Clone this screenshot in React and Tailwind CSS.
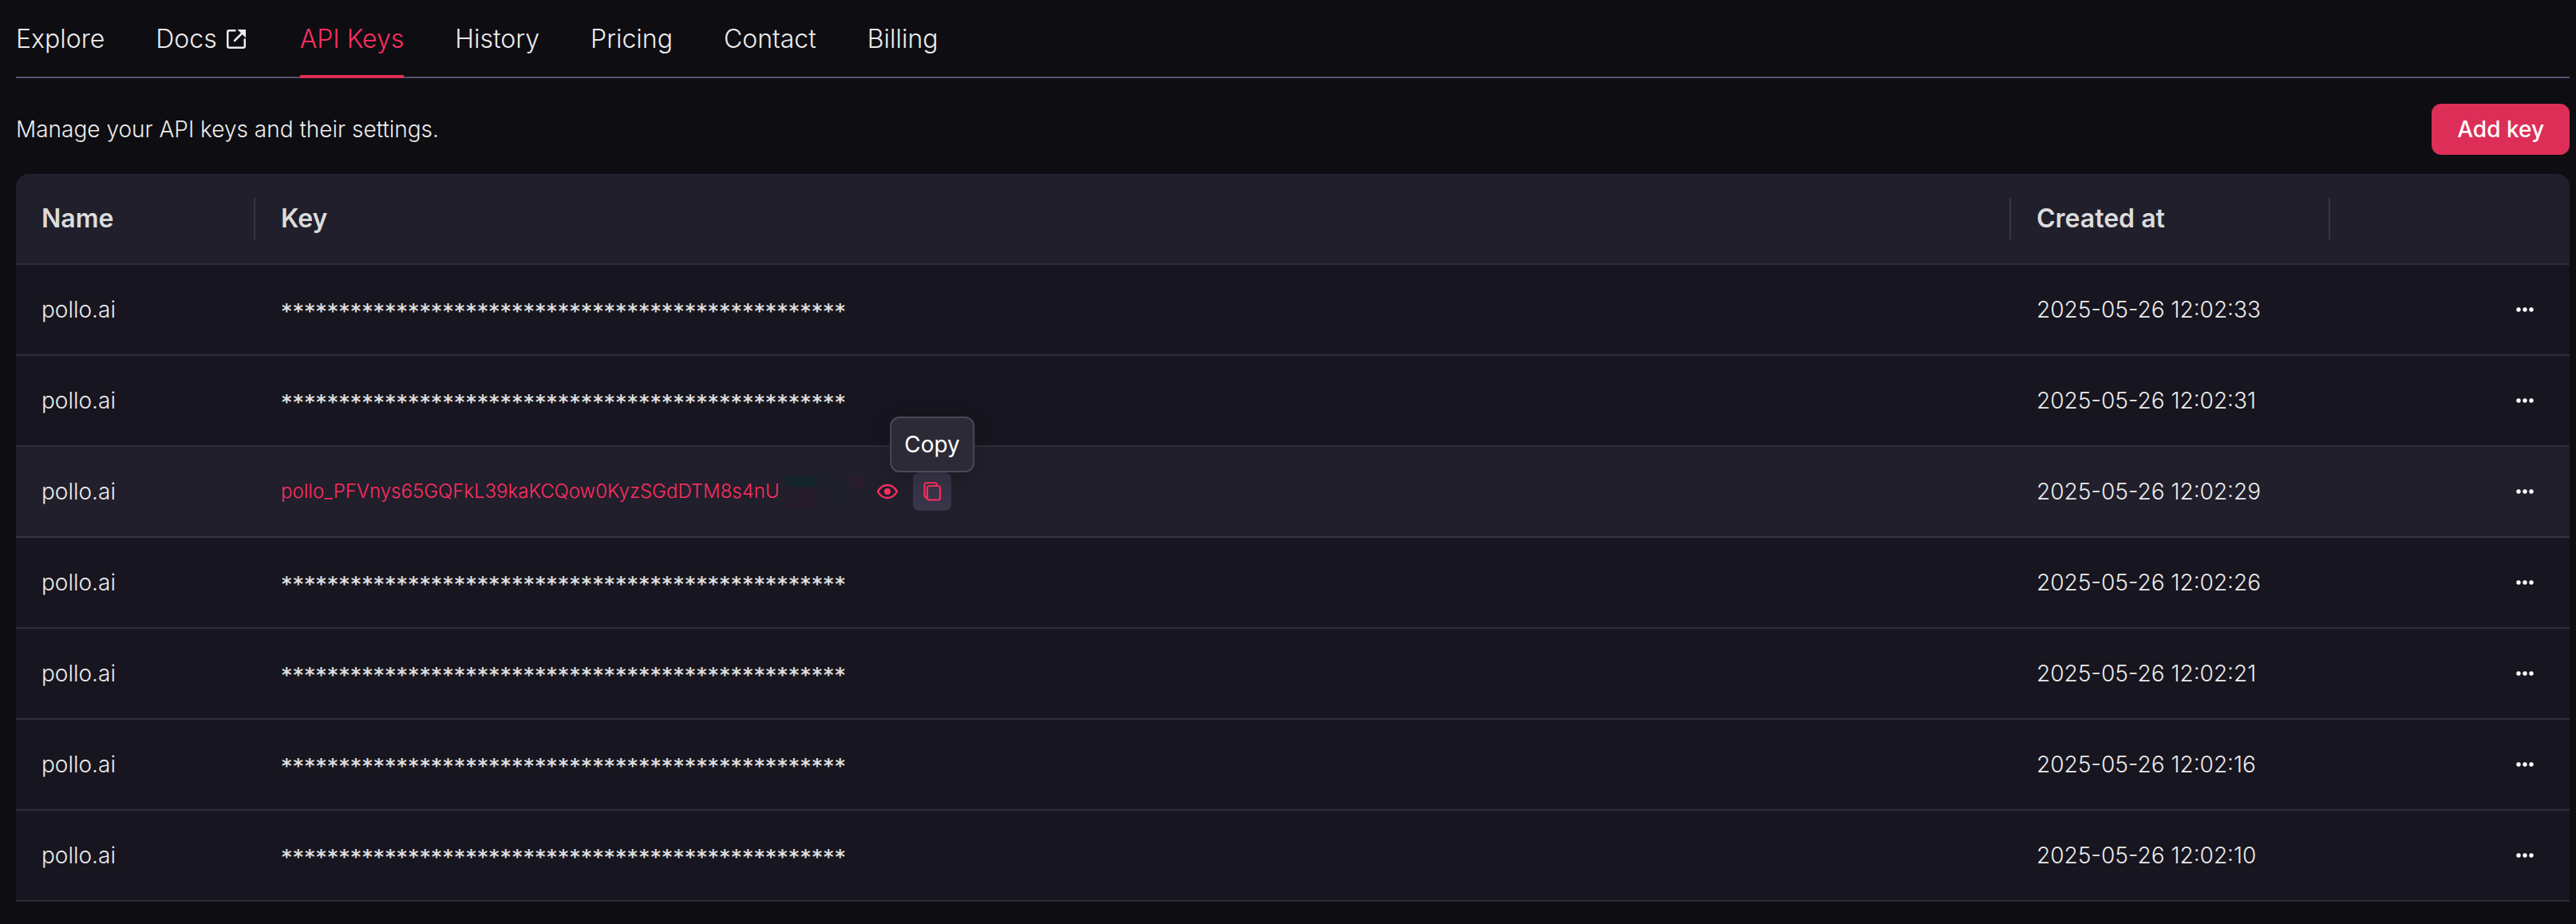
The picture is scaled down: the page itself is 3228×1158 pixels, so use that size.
import { useState } from "react";

const NAV = [
  { label: "Explore" },
  { label: "Docs", external: true },
  { label: "API Keys", active: true },
  { label: "History" },
  { label: "Pricing" },
  { label: "Contact" },
  { label: "Billing" },
];

const MASK = "*".repeat(49);

const KEYS = [
  { id: 1, name: "pollo.ai", createdAt: "2025-05-26 12:02:33" },
  { id: 2, name: "pollo.ai", createdAt: "2025-05-26 12:02:31" },
  { id: 3, name: "pollo.ai", createdAt: "2025-05-26 12:02:29", secret: "pollo_PFVnys65GQFkL39kaKCQow0KyzSGdDTM8s4nU" },
  { id: 4, name: "pollo.ai", createdAt: "2025-05-26 12:02:26" },
  { id: 5, name: "pollo.ai", createdAt: "2025-05-26 12:02:21" },
  { id: 6, name: "pollo.ai", createdAt: "2025-05-26 12:02:16" },
  { id: 7, name: "pollo.ai", createdAt: "2025-05-26 12:02:10" },
];

function ExternalIcon() {
  return (
    <svg className="size-8" viewBox="0 0 32 32" fill="none" stroke="currentColor" strokeWidth="2.5" aria-hidden="true">
      <path d="M15.500 5.250H7.250a2 2 0 0 0-2 2v17.500a2 2 0 0 0 2 2h17.500a2 2 0 0 0 2-2V15.500" />
      <path d="M14 18 24.500 7.500" strokeLinecap="round" />
      <path d="M17.500 4H28v10.500z" fill="currentColor" stroke="none" />
    </svg>
  );
}

function EyeIcon() {
  return (
    <svg className="size-8" viewBox="0 0 32 32" fill="none" aria-hidden="true">
      <path d="M4 16c3-5.500 7-8 12-8s9 2.500 12 8c-3 5.500-7 8-12 8s-9-2.500-12-8z" stroke="currentColor" strokeWidth="2.4" strokeLinejoin="round" />
      <circle cx="16" cy="16" r="4" fill="currentColor" />
    </svg>
  );
}

function CopyIcon() {
  return (
    <svg className="size-8" viewBox="0 0 32 32" fill="none" stroke="currentColor" strokeWidth="2.2" aria-hidden="true">
      <rect x="10" y="9" width="16" height="17.500" rx="2.5" />
      <path d="M22 9V8a3 3 0 0 0-3-3H9.500a3 3 0 0 0-3 3v12.500c0 1.700 1.300 3 3.500 3.500" />
    </svg>
  );
}

function DotsIcon() {
  return (
    <svg className="size-8" viewBox="0 0 32 32" fill="currentColor" aria-hidden="true">
      <circle cx="8" cy="16" r="2.7" />
      <circle cx="16" cy="16" r="2.7" />
      <circle cx="24" cy="16" r="2.7" />
    </svg>
  );
}

function HeadCell({ label, divider = true }) {
  return (
    <th scope="col" className="p-0 text-left font-semibold text-[#dcdcdc] border-b-2 border-[#2f2d39]">
      <div className={`h-[52px] pl-8 flex items-center ${divider ? "border-r-2 border-[#383543]" : ""}`}>{label}</div>
    </th>
  );
}

// Faint colour blocks covering the tail of the key
function Redaction() {
  return (
    <span aria-hidden="true" className="ml-2 flex items-start">
      <span className="w-10">
        <span className="block h-[14px] bg-[#15262a]" />
        <span className="block h-[26px] bg-[#251d2a]" />
      </span>
      <span className="w-[42px] h-10 bg-[#20202c]" />
      <span className="w-4 h-[14px] bg-[#291c2b]" />
    </span>
  );
}

function SecretKey({ value }) {
  return (
    <div className="flex items-center gap-2 text-[#fe2e62]">
      <span className="w-[728px] flex items-center text-[24px]">
        {value}
        <Redaction />
      </span>
      <button type="button" aria-label="Hide key" className="size-12 flex items-center justify-center rounded-lg">
        <EyeIcon />
      </button>
      <div className="relative">
        <button type="button" aria-label="Copy key" className="size-12 flex items-center justify-center rounded-lg bg-[#383548]">
          <CopyIcon />
        </button>
        <div role="tooltip" className="absolute bottom-full left-1/2 -translate-x-1/2 h-[70px] px-4 flex items-center rounded-xl border-2 border-[#4a4758] bg-[#2c2a37] text-white font-normal shadow-[0_8px_32px_rgba(0,0,0,0.2)]">
          Copy
        </div>
      </div>
    </div>
  );
}

export default function App() {
  const [keys] = useState(KEYS);

  return (
    <div className="min-h-screen bg-[#0e0d12] text-[#ececec] font-['Inter',sans-serif] font-light text-[28px] leading-[44px] pl-5 pr-2">
      <nav className="h-[98px] flex gap-16 border-b-2 border-[#56506e] text-[32px]">
        {NAV.map((n) => (
          <a key={n.label} href="#" aria-current={n.active ? "page" : undefined}
            className={`h-[98px] flex items-center gap-2 border-y-4 border-t-transparent ${n.active ? "text-[#fe2e62] border-b-[#dd2e58]" : "border-b-transparent"}`}>
            {n.label}
            {n.external && <ExternalIcon />}
          </a>
        ))}
      </nav>

      <div className="flex items-center justify-between pt-8 pb-6">
        <p>Manage your API keys and their settings.</p>
        <button type="button" className="h-16 px-8 rounded-xl bg-[#dd2e58] text-white font-medium">Add key</button>
      </div>

      <div className="rounded-t-2xl overflow-hidden">
        <table className="w-full table-fixed border-separate border-spacing-0 bg-[#17151f]">
          <colgroup>
            <col className="w-[300px]" />
            <col />
            <col className="w-[400px]" />
            <col className="w-[300px]" />
          </colgroup>
          <thead>
            <tr className="h-[114px] bg-[#211f2b] text-[32px]">
              <HeadCell label="Name" />
              <HeadCell label="Key" />
              <HeadCell label="Created at" />
              <HeadCell divider={false} />
            </tr>
          </thead>
          <tbody>
            {keys.map((k) => (
              <tr key={k.id} className={`h-[114px] *:p-0 *:border-b-2 ${k.secret ? "bg-[#211f2b] *:border-[#383541]" : "*:border-[#2f2d39]"}`}>
                <td><div className="pl-8">{k.name}</div></td>
                <td>
                  <div className="pl-8">
                    {k.secret ? <SecretKey value={k.secret} /> : <div className="pt-1 font-['DejaVu_Sans_Mono',monospace] font-bold text-[24px] text-[#dcdcdc]">{MASK}</div>}
                  </div>
                </td>
                <td><div className="pl-8">{k.createdAt}</div></td>
                <td>
                  <div className="pr-8 flex justify-end">
                    <button type="button" aria-label="More actions" className="size-12 flex items-center justify-center text-white">
                      <DotsIcon />
                    </button>
                  </div>
                </td>
              </tr>
            ))}
          </tbody>
        </table>
      </div>
    </div>
  );
}
